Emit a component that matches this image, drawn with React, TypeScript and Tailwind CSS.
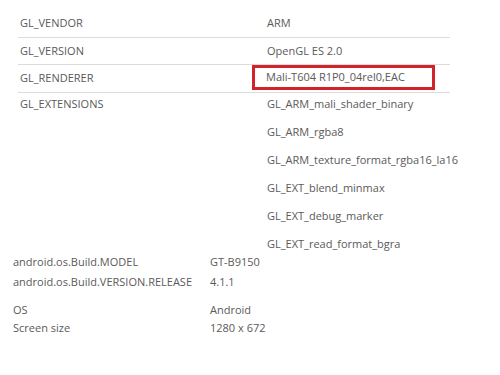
const GL_ROWS = [
  { label: "GL_VENDOR", value: "ARM", h: "h-[28px]" },
  { label: "GL_VERSION", value: "OpenGL ES 2.0", h: "h-[27px]" },
  { label: "GL_RENDERER", value: "Mali-T604 R1P0_04rel0,EAC", h: "h-[28px]", marked: true },
];

const EXTENSIONS = [
  "GL_ARM_mali_shader_binary",
  "GL_ARM_rgba8",
  "GL_ARM_texture_format_rgba16_la16",
  "GL_EXT_blend_minmax",
  "GL_EXT_debug_marker",
  "GL_EXT_read_format_bgra",
];

const BUILD = [
  { label: "android.os.Build.MODEL", value: "GT-B9150" },
  { label: "android.os.Build.VERSION.RELEASE", value: "4.1.1" },
];

const DEVICE = [
  { label: "OS", value: "Android" },
  { label: "Screen size", value: "1280 x 672" },
];

export default function App() {
  return (
    <div className="w-[500px] h-[375px] bg-white text-[#5a5a5a] text-[11px] font-['Open_Sans',sans-serif] overflow-hidden">
      {/* GL table */}
      <div className="ml-[18px] mt-[10px] w-[432px]">
        {GL_ROWS.map((row) => (
          <div
            key={row.label}
            className={`flex ${row.h} border-b border-[#dcdcdc]`}
          >
            <div className="w-[234px] shrink-0 pl-[2px] flex items-center">
              {row.label}
            </div>
            <div className="flex-1 flex items-center">
              {row.marked ? (
                <div className="self-start w-[183px] h-[25px] flex items-center pl-[11px] border-[3px] border-[#d2232a]">
                  {row.value}
                </div>
              ) : (
                <span className="pl-[15px]">{row.value}</span>
              )}
            </div>
          </div>
        ))}
        <div className="flex">
          <div className="w-[234px] shrink-0 pl-[2px] leading-[22px]">
            GL_EXTENSIONS
          </div>
          <div className="flex-1 pl-[15px] whitespace-nowrap">
            {EXTENSIONS.map((ext) => (
              <div key={ext} className="h-[28px] leading-[22px]">
                {ext}
              </div>
            ))}
          </div>
        </div>
      </div>

      {/* Build info */}
      <div className="ml-[13px] mt-[-9px]">
        {BUILD.map((row) => (
          <div key={row.label} className="flex leading-[20px]">
            <div className="w-[197px] shrink-0">{row.label}</div>
            <div>{row.value}</div>
          </div>
        ))}
        <div className="mt-[9px]">
          {DEVICE.map((row) => (
            <div key={row.label} className="flex leading-[18px]">
              <div className="w-[197px] shrink-0">{row.label}</div>
              <div>{row.value}</div>
            </div>
          ))}
        </div>
      </div>
    </div>
  );
}
